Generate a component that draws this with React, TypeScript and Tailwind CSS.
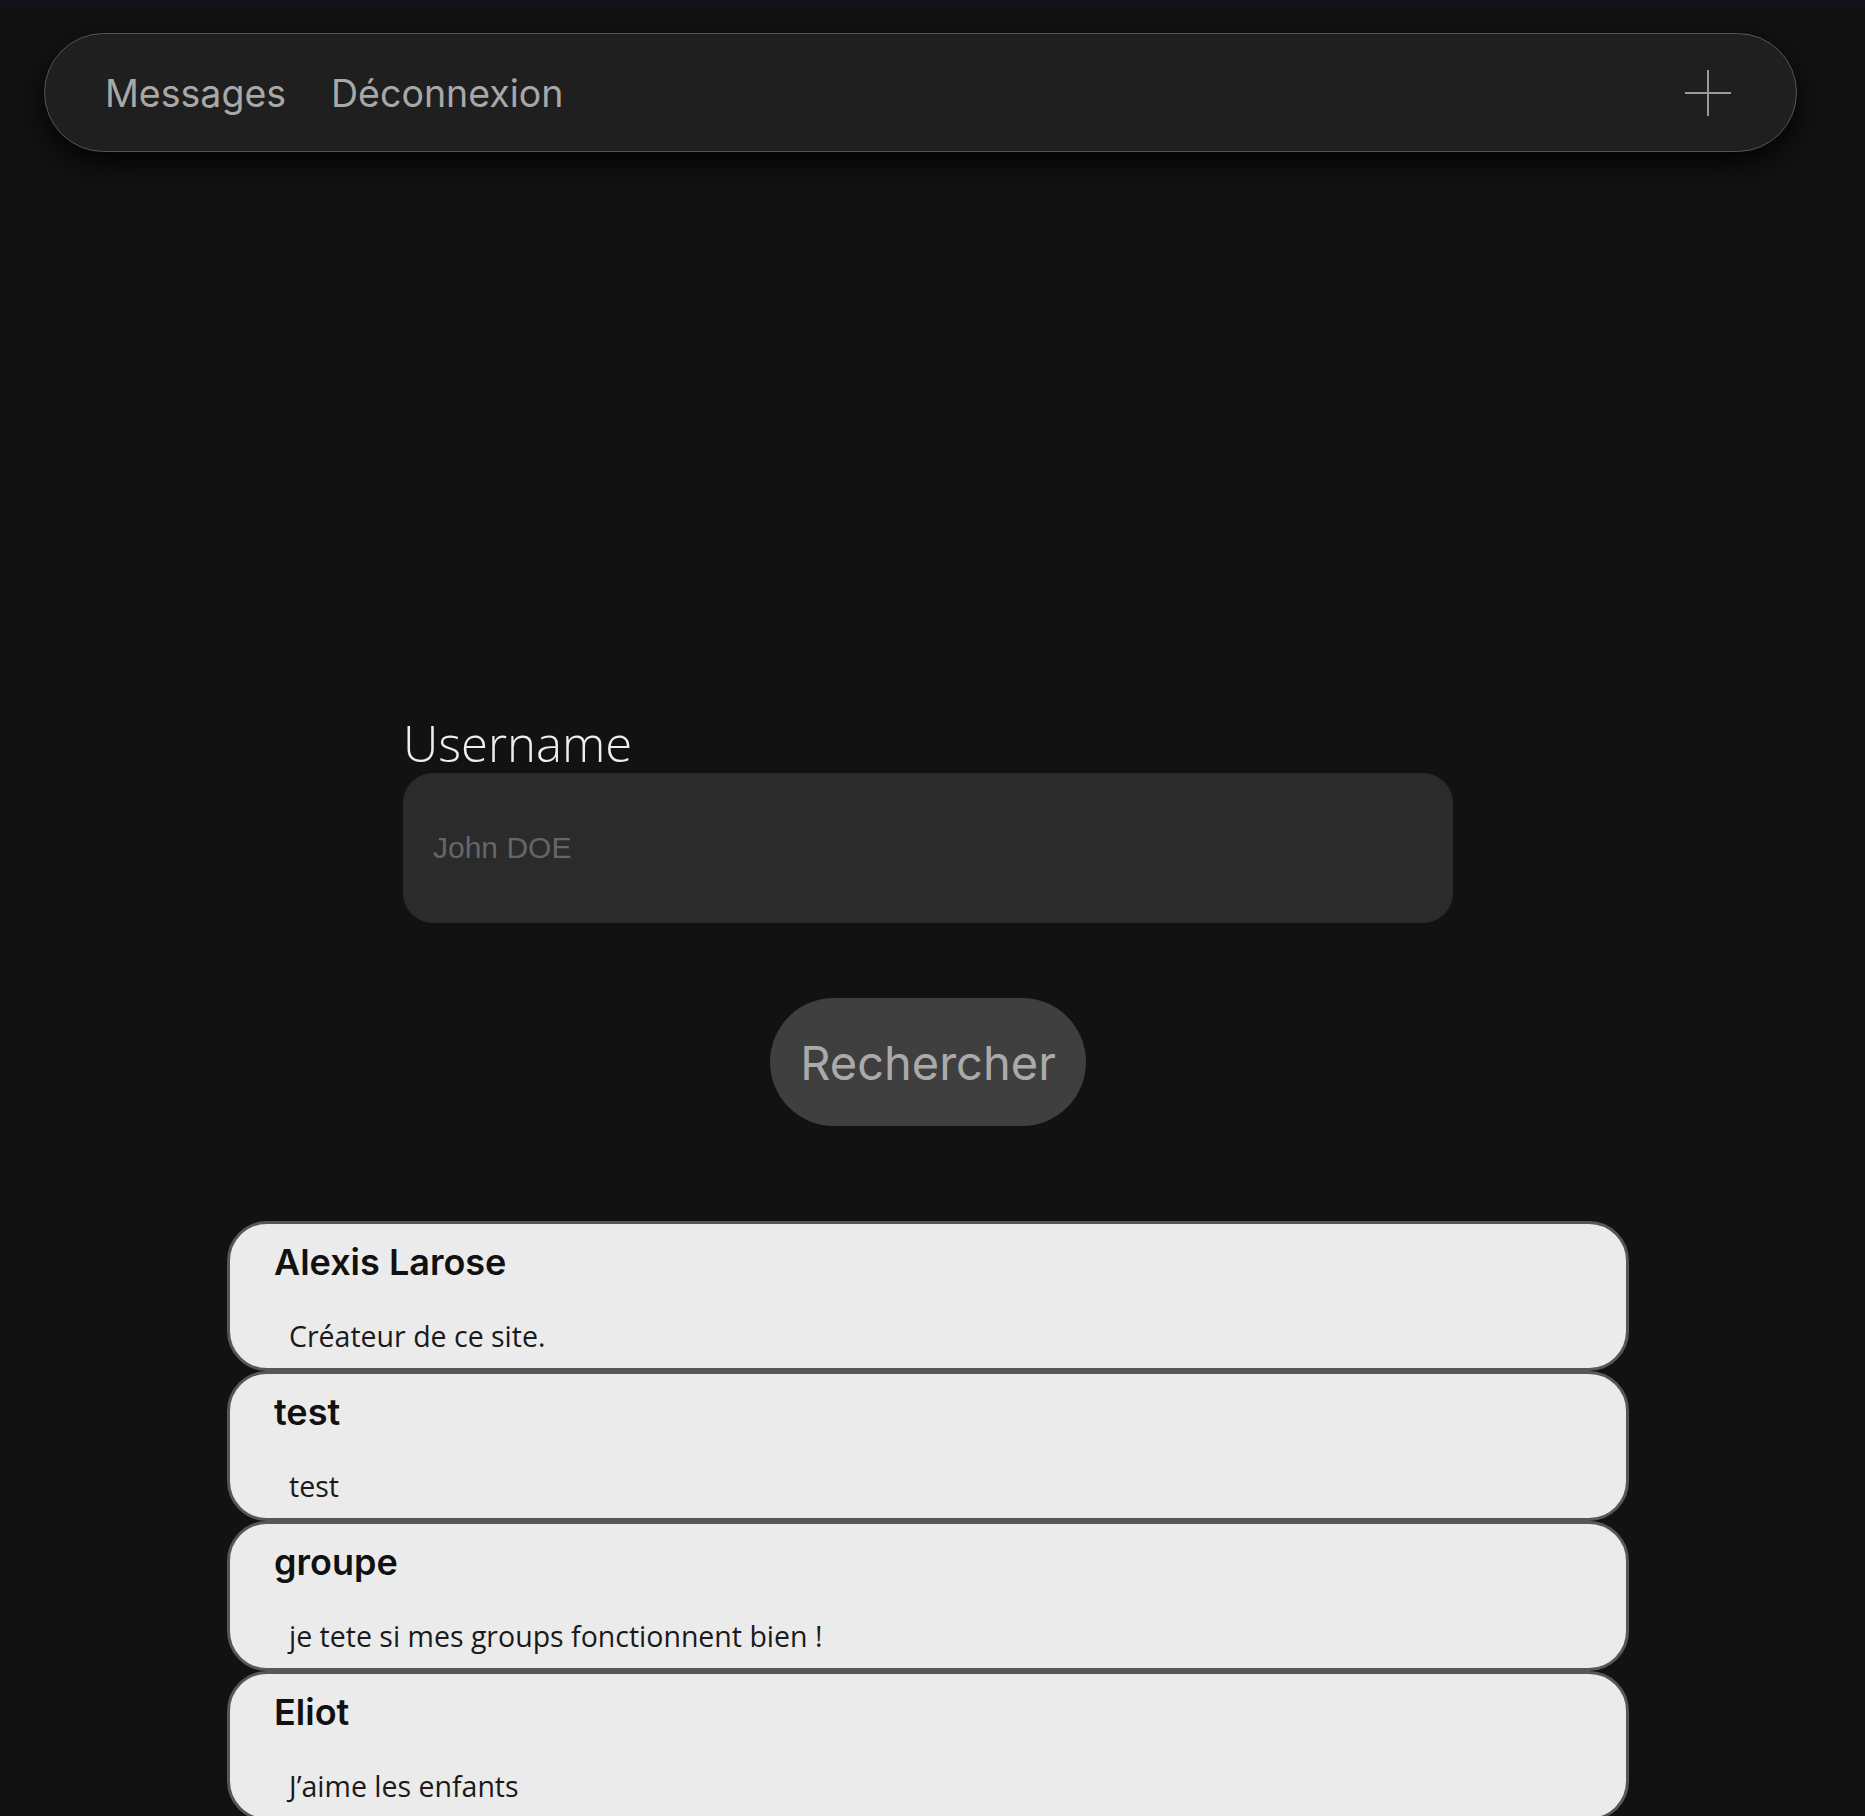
import React from 'react';

const users = [
    { name: 'Alexis Larose', bio: 'Créateur de ce site.' },
    { name: 'test', bio: 'test' },
    { name: 'groupe', bio: 'je tete si mes groups fonctionnent bien !' },
    { name: 'Eliot', bio: 'J’aime les enfants' },
];

function PlusIcon() {
    return (
        <svg width="46" height="46" viewBox="0 0 46 46" fill="none">
            <line x1="23" y1="0" x2="23" y2="46" stroke="#9a9a9a" strokeWidth="2" />
            <line x1="0" y1="23" x2="46" y2="23" stroke="#9a9a9a" strokeWidth="2" />
        </svg>
    );
}

function UserCard({ name, bio }: { name: string; bio: string }) {
    return (
        <div className="w-[1402px] h-[150px] bg-[#ebebeb] border-[3px] border-[#575757] rounded-[40px] pt-[20px] pl-[44px]">
            <h3 className="font-['Inter',sans-serif] font-semibold text-[36px] leading-none text-[#111]">{name}</h3>
            <p className="mt-[42px] ml-[15px] font-['Open_Sans',sans-serif] text-[28.5px] leading-none text-[#1a1a1a]">{bio}</p>
        </div>
    );
}

export default function App() {
    return (
        <div className="min-h-[1816px] bg-[#121212] overflow-hidden">
            <div className="h-[3px] bg-[#14111f]" />

            <nav className="mt-[30px] ml-[44px] w-[1753px] h-[119px] flex items-center justify-between pl-[60px] pr-[65px] bg-[#1f1f1f] border border-[#555] rounded-full shadow-[0_12px_30px_rgba(0,0,0,0.85)]">
                <div className="flex gap-[45px] pt-[2px] font-['Inter',sans-serif] text-[37.5px] leading-none text-[#a8a8a8]">
                    <span>Messages</span>
                    <span>Déconnexion</span>
                </div>
                <PlusIcon />
            </nav>

            <main className="w-[1856px] flex flex-col items-center">
                <div className="mt-[567px] w-[1050px]">
                    <label className="block h-[48px] font-['Open_Sans',sans-serif] font-light text-[49px] leading-none text-[#eeeeee]">
                        Username
                    </label>
                    <input
                        type="text"
                        placeholder="John DOE"
                        className="mt-[6px] w-[1050px] h-[150px] rounded-[30px] bg-[#2b2b2b] pl-[30px] font-['Liberation_Sans',sans-serif] text-[30px] text-[#ddd] placeholder:text-[#666] outline-none"
                    />
                </div>

                <button className="mt-[75px] w-[316px] h-[128px] rounded-full bg-[#3f3f3f] font-['Inter',sans-serif] text-[47px] leading-none text-[#aaaaaa]">
                    Rechercher
                </button>

                <div className="mt-[95px] flex flex-col">
                    {users.map((u) => (
                        <UserCard key={u.name} name={u.name} bio={u.bio} />
                    ))}
                </div>
            </main>
        </div>
    );
}
